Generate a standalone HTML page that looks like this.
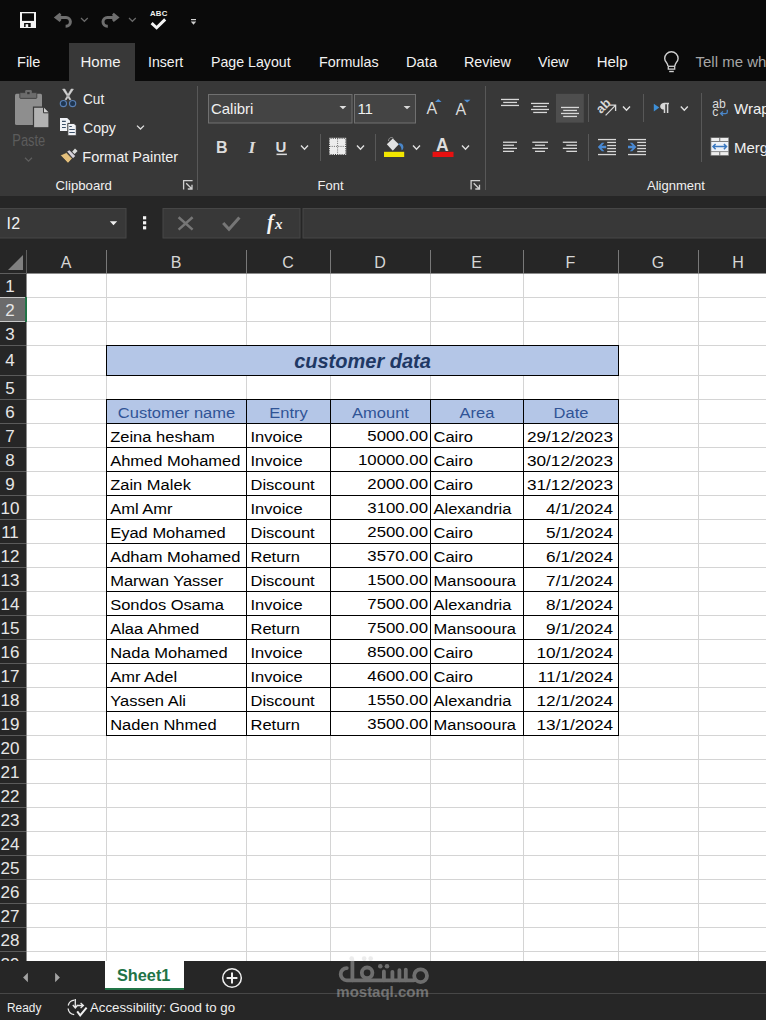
<!DOCTYPE html>
<html><head><meta charset="utf-8"><style>
*{margin:0;padding:0;box-sizing:border-box}
html,body{width:766px;height:1020px;overflow:hidden;background:#222;font-family:"Liberation Sans",sans-serif}
.a{position:absolute}
.t{position:absolute;white-space:nowrap;line-height:1;transform-origin:0 0}
</style></head><body>
<div class="a" style="left:0px;top:0px;width:766px;height:81px;background:#0a0a0a;"></div>
<div class="a" style="left:69px;top:43px;width:66px;height:38px;background:#383838;"></div>
<div class="a" style="left:0px;top:81px;width:766px;height:115px;background:#383838;"></div>
<div class="a" style="left:0px;top:196px;width:766px;height:54px;background:#262626;"></div>
<div class="a" style="left:27px;top:274px;width:739px;height:687px;background:#fff;"></div>
<div class="a" style="left:0px;top:250px;width:766px;height:23px;background:#262626;"></div>
<div class="a" style="left:0px;top:250px;width:26px;height:711px;background:#262626;"></div>
<div class="a" style="left:0px;top:273px;width:27px;height:1px;background:#5e5e5e;"></div>
<div class="a" style="left:27px;top:273px;width:739px;height:1px;background:#8c8c8c;"></div>
<div class="a" style="left:26px;top:250px;width:1px;height:24px;background:#5e5e5e;"></div>
<div class="a" style="left:26px;top:274px;width:1px;height:687px;background:#8a8a8a;"></div>
<div class="a" style="left:106px;top:250px;width:1px;height:23px;background:#787878;"></div>
<div class="a" style="left:246px;top:250px;width:1px;height:23px;background:#787878;"></div>
<div class="a" style="left:330px;top:250px;width:1px;height:23px;background:#787878;"></div>
<div class="a" style="left:430px;top:250px;width:1px;height:23px;background:#787878;"></div>
<div class="a" style="left:523px;top:250px;width:1px;height:23px;background:#787878;"></div>
<div class="a" style="left:618px;top:250px;width:1px;height:23px;background:#787878;"></div>
<div class="a" style="left:698px;top:250px;width:1px;height:23px;background:#787878;"></div>
<div class="t" style="left:26px;width:80px;top:255px;font-size:16px;color:#d6d6d6;text-align:center">A</div>
<div class="t" style="left:106px;width:140px;top:255px;font-size:16px;color:#d6d6d6;text-align:center">B</div>
<div class="t" style="left:246px;width:84px;top:255px;font-size:16px;color:#d6d6d6;text-align:center">C</div>
<div class="t" style="left:330px;width:100px;top:255px;font-size:16px;color:#d6d6d6;text-align:center">D</div>
<div class="t" style="left:430px;width:93px;top:255px;font-size:16px;color:#d6d6d6;text-align:center">E</div>
<div class="t" style="left:523px;width:95px;top:255px;font-size:16px;color:#d6d6d6;text-align:center">F</div>
<div class="t" style="left:618px;width:80px;top:255px;font-size:16px;color:#d6d6d6;text-align:center">G</div>
<div class="t" style="left:698px;width:80px;top:255px;font-size:16px;color:#d6d6d6;text-align:center">H</div>
<div class="a" style="left:106px;top:274px;width:1px;height:687px;background:#d4d4d4;"></div>
<div class="a" style="left:246px;top:274px;width:1px;height:687px;background:#d4d4d4;"></div>
<div class="a" style="left:330px;top:274px;width:1px;height:687px;background:#d4d4d4;"></div>
<div class="a" style="left:430px;top:274px;width:1px;height:687px;background:#d4d4d4;"></div>
<div class="a" style="left:523px;top:274px;width:1px;height:687px;background:#d4d4d4;"></div>
<div class="a" style="left:618px;top:274px;width:1px;height:687px;background:#d4d4d4;"></div>
<div class="a" style="left:698px;top:274px;width:1px;height:687px;background:#d4d4d4;"></div>
<div class="a" style="left:27px;top:297px;width:739px;height:1px;background:#d4d4d4;"></div>
<div class="a" style="left:0px;top:297px;width:26px;height:1px;background:#5a5a5a;"></div>
<div class="a" style="left:27px;top:321px;width:739px;height:1px;background:#d4d4d4;"></div>
<div class="a" style="left:0px;top:321px;width:26px;height:1px;background:#5a5a5a;"></div>
<div class="a" style="left:27px;top:345px;width:739px;height:1px;background:#d4d4d4;"></div>
<div class="a" style="left:0px;top:345px;width:26px;height:1px;background:#5a5a5a;"></div>
<div class="a" style="left:27px;top:375px;width:739px;height:1px;background:#d4d4d4;"></div>
<div class="a" style="left:0px;top:375px;width:26px;height:1px;background:#5a5a5a;"></div>
<div class="a" style="left:27px;top:399px;width:739px;height:1px;background:#d4d4d4;"></div>
<div class="a" style="left:0px;top:399px;width:26px;height:1px;background:#5a5a5a;"></div>
<div class="a" style="left:27px;top:423px;width:739px;height:1px;background:#d4d4d4;"></div>
<div class="a" style="left:0px;top:423px;width:26px;height:1px;background:#5a5a5a;"></div>
<div class="a" style="left:27px;top:447px;width:739px;height:1px;background:#d4d4d4;"></div>
<div class="a" style="left:0px;top:447px;width:26px;height:1px;background:#5a5a5a;"></div>
<div class="a" style="left:27px;top:471px;width:739px;height:1px;background:#d4d4d4;"></div>
<div class="a" style="left:0px;top:471px;width:26px;height:1px;background:#5a5a5a;"></div>
<div class="a" style="left:27px;top:495px;width:739px;height:1px;background:#d4d4d4;"></div>
<div class="a" style="left:0px;top:495px;width:26px;height:1px;background:#5a5a5a;"></div>
<div class="a" style="left:27px;top:519px;width:739px;height:1px;background:#d4d4d4;"></div>
<div class="a" style="left:0px;top:519px;width:26px;height:1px;background:#5a5a5a;"></div>
<div class="a" style="left:27px;top:543px;width:739px;height:1px;background:#d4d4d4;"></div>
<div class="a" style="left:0px;top:543px;width:26px;height:1px;background:#5a5a5a;"></div>
<div class="a" style="left:27px;top:567px;width:739px;height:1px;background:#d4d4d4;"></div>
<div class="a" style="left:0px;top:567px;width:26px;height:1px;background:#5a5a5a;"></div>
<div class="a" style="left:27px;top:591px;width:739px;height:1px;background:#d4d4d4;"></div>
<div class="a" style="left:0px;top:591px;width:26px;height:1px;background:#5a5a5a;"></div>
<div class="a" style="left:27px;top:615px;width:739px;height:1px;background:#d4d4d4;"></div>
<div class="a" style="left:0px;top:615px;width:26px;height:1px;background:#5a5a5a;"></div>
<div class="a" style="left:27px;top:639px;width:739px;height:1px;background:#d4d4d4;"></div>
<div class="a" style="left:0px;top:639px;width:26px;height:1px;background:#5a5a5a;"></div>
<div class="a" style="left:27px;top:663px;width:739px;height:1px;background:#d4d4d4;"></div>
<div class="a" style="left:0px;top:663px;width:26px;height:1px;background:#5a5a5a;"></div>
<div class="a" style="left:27px;top:687px;width:739px;height:1px;background:#d4d4d4;"></div>
<div class="a" style="left:0px;top:687px;width:26px;height:1px;background:#5a5a5a;"></div>
<div class="a" style="left:27px;top:711px;width:739px;height:1px;background:#d4d4d4;"></div>
<div class="a" style="left:0px;top:711px;width:26px;height:1px;background:#5a5a5a;"></div>
<div class="a" style="left:27px;top:735px;width:739px;height:1px;background:#d4d4d4;"></div>
<div class="a" style="left:0px;top:735px;width:26px;height:1px;background:#5a5a5a;"></div>
<div class="a" style="left:27px;top:759px;width:739px;height:1px;background:#d4d4d4;"></div>
<div class="a" style="left:0px;top:759px;width:26px;height:1px;background:#5a5a5a;"></div>
<div class="a" style="left:27px;top:783px;width:739px;height:1px;background:#d4d4d4;"></div>
<div class="a" style="left:0px;top:783px;width:26px;height:1px;background:#5a5a5a;"></div>
<div class="a" style="left:27px;top:807px;width:739px;height:1px;background:#d4d4d4;"></div>
<div class="a" style="left:0px;top:807px;width:26px;height:1px;background:#5a5a5a;"></div>
<div class="a" style="left:27px;top:831px;width:739px;height:1px;background:#d4d4d4;"></div>
<div class="a" style="left:0px;top:831px;width:26px;height:1px;background:#5a5a5a;"></div>
<div class="a" style="left:27px;top:855px;width:739px;height:1px;background:#d4d4d4;"></div>
<div class="a" style="left:0px;top:855px;width:26px;height:1px;background:#5a5a5a;"></div>
<div class="a" style="left:27px;top:879px;width:739px;height:1px;background:#d4d4d4;"></div>
<div class="a" style="left:0px;top:879px;width:26px;height:1px;background:#5a5a5a;"></div>
<div class="a" style="left:27px;top:903px;width:739px;height:1px;background:#d4d4d4;"></div>
<div class="a" style="left:0px;top:903px;width:26px;height:1px;background:#5a5a5a;"></div>
<div class="a" style="left:27px;top:927px;width:739px;height:1px;background:#d4d4d4;"></div>
<div class="a" style="left:0px;top:927px;width:26px;height:1px;background:#5a5a5a;"></div>
<div class="a" style="left:27px;top:951px;width:739px;height:1px;background:#d4d4d4;"></div>
<div class="a" style="left:0px;top:951px;width:26px;height:1px;background:#5a5a5a;"></div>
<div class="a" style="left:0px;top:298px;width:26px;height:23px;background:#6b6b6b;"></div>
<div class="a" style="left:0px;top:297px;width:26px;height:1px;background:#c8c8c8;"></div>
<div class="a" style="left:0px;top:321px;width:26px;height:1px;background:#c8c8c8;"></div>
<div class="a" style="left:25px;top:297px;width:2px;height:25px;background:#217346;"></div>
<div class="t" style="left:0;width:20px;text-align:center;top:278px;font-size:17px;color:#e6e6e6">1</div>
<div class="t" style="left:0;width:20px;text-align:center;top:302px;font-size:17px;color:#e6e6e6">2</div>
<div class="t" style="left:0;width:20px;text-align:center;top:326px;font-size:17px;color:#e6e6e6">3</div>
<div class="t" style="left:0;width:20px;text-align:center;top:352px;font-size:17px;color:#e6e6e6">4</div>
<div class="t" style="left:0;width:20px;text-align:center;top:380px;font-size:17px;color:#e6e6e6">5</div>
<div class="t" style="left:0;width:20px;text-align:center;top:404px;font-size:17px;color:#e6e6e6">6</div>
<div class="t" style="left:0;width:20px;text-align:center;top:428px;font-size:17px;color:#e6e6e6">7</div>
<div class="t" style="left:0;width:20px;text-align:center;top:452px;font-size:17px;color:#e6e6e6">8</div>
<div class="t" style="left:0;width:20px;text-align:center;top:476px;font-size:17px;color:#e6e6e6">9</div>
<div class="t" style="left:0;width:20px;text-align:center;top:500px;font-size:17px;color:#e6e6e6">10</div>
<div class="t" style="left:0;width:20px;text-align:center;top:524px;font-size:17px;color:#e6e6e6">11</div>
<div class="t" style="left:0;width:20px;text-align:center;top:548px;font-size:17px;color:#e6e6e6">12</div>
<div class="t" style="left:0;width:20px;text-align:center;top:572px;font-size:17px;color:#e6e6e6">13</div>
<div class="t" style="left:0;width:20px;text-align:center;top:596px;font-size:17px;color:#e6e6e6">14</div>
<div class="t" style="left:0;width:20px;text-align:center;top:620px;font-size:17px;color:#e6e6e6">15</div>
<div class="t" style="left:0;width:20px;text-align:center;top:644px;font-size:17px;color:#e6e6e6">16</div>
<div class="t" style="left:0;width:20px;text-align:center;top:668px;font-size:17px;color:#e6e6e6">17</div>
<div class="t" style="left:0;width:20px;text-align:center;top:692px;font-size:17px;color:#e6e6e6">18</div>
<div class="t" style="left:0;width:20px;text-align:center;top:716px;font-size:17px;color:#e6e6e6">19</div>
<div class="t" style="left:0;width:20px;text-align:center;top:740px;font-size:17px;color:#e6e6e6">20</div>
<div class="t" style="left:0;width:20px;text-align:center;top:764px;font-size:17px;color:#e6e6e6">21</div>
<div class="t" style="left:0;width:20px;text-align:center;top:788px;font-size:17px;color:#e6e6e6">22</div>
<div class="t" style="left:0;width:20px;text-align:center;top:812px;font-size:17px;color:#e6e6e6">23</div>
<div class="t" style="left:0;width:20px;text-align:center;top:836px;font-size:17px;color:#e6e6e6">24</div>
<div class="t" style="left:0;width:20px;text-align:center;top:860px;font-size:17px;color:#e6e6e6">25</div>
<div class="t" style="left:0;width:20px;text-align:center;top:884px;font-size:17px;color:#e6e6e6">26</div>
<div class="t" style="left:0;width:20px;text-align:center;top:908px;font-size:17px;color:#e6e6e6">27</div>
<div class="t" style="left:0;width:20px;text-align:center;top:932px;font-size:17px;color:#e6e6e6">28</div>
<div class="t" style="left:0;width:20px;text-align:center;top:956px;font-size:17px;color:#e6e6e6">29</div>
<div class="a" style="left:0px;top:961px;width:766px;height:32px;background:#262626;"></div>
<div class="a" style="left:0px;top:993px;width:766px;height:1px;background:#474747;"></div>
<div class="a" style="left:0px;top:994px;width:766px;height:26px;background:#262626;"></div>
<div class="a" style="left:105px;top:961px;width:79px;height:27px;background:#fff;"></div>
<div class="a" style="left:105px;top:988px;width:79px;height:2px;background:#217346;"></div>
<svg class="a" style="left:0;top:0" width="766" height="1020" viewBox="0 0 766 1020">
<rect x="20" y="12" width="16" height="16" fill="#f4f4f4"/>
<rect x="22" y="13.3" width="12" height="7.6" fill="#0a0a0a"/>
<rect x="24.1" y="23" width="6.6" height="4" fill="#0a0a0a"/>
<rect x="25.6" y="24.2" width="2.6" height="2.8" fill="#f4f4f4"/>
<g><path d="M56.5 17.4 H66 A4.4 4.4 0 0 1 66 26.2 H65.6" fill="none" stroke="#6e6e6e" stroke-width="3"/>
<path d="M60.6 13.9 L56.2 17.4 L60.6 20.9" fill="none" stroke="#6e6e6e" stroke-width="3" stroke-linejoin="miter"/></g>
<g transform="translate(173.4 0) scale(-1 1)"><path d="M56.5 17.4 H66 A4.4 4.4 0 0 1 66 26.2 H65.6" fill="none" stroke="#6e6e6e" stroke-width="3"/>
<path d="M60.6 13.9 L56.2 17.4 L60.6 20.9" fill="none" stroke="#6e6e6e" stroke-width="3" stroke-linejoin="miter"/></g>
<path d="M81 18 L84.4 21.3 L87.8 18" fill="none" stroke="#6a6a6a" stroke-width="1.2"/>
<path d="M129 18 L132.4 21.3 L135.8 18" fill="none" stroke="#6a6a6a" stroke-width="1.2"/>
<text x="150" y="15.8" font-family="Liberation Sans" font-weight="bold" font-size="7.8" fill="#f0f0f0" letter-spacing="0.2">ABC</text>
<path d="M151.6 23.2 L156.6 27.8 L165.2 19.4" fill="none" stroke="#f4f4f4" stroke-width="3"/>
<rect x="191" y="19" width="5" height="1.2" fill="#d0d0d0"/>
<path d="M190.8 21.4 H196.2 L193.5 24.8 Z" fill="#d0d0d0"/>
<path d="M667.9 66 C667.9 63.2 664.7 61.6 664.7 58.4 A6.7 6.7 0 0 1 678.1 58.4 C678.1 61.6 674.9 63.2 674.9 66" fill="none" stroke="#d0d0d0" stroke-width="1.4"/>
<rect x="668.3" y="66.3" width="6.4" height="2.8" fill="none" stroke="#d0d0d0" stroke-width="1.3"/>
<rect x="669.2" y="70.8" width="4.6" height="1.4" fill="#d0d0d0"/>
<rect x="15" y="93.7" width="27" height="31.3" rx="1.5" fill="#8e8e8e"/>
<rect x="19.8" y="92.6" width="17" height="5.8" rx="0.8" fill="#6c6c6c" stroke="#383838" stroke-width="0.8"/>
<rect x="25.2" y="90" width="6.6" height="4" rx="1.2" fill="#6c6c6c"/>
<rect x="27.2" y="92" width="2.4" height="2.2" fill="#383838"/>
<path d="M33.5 107.2 H43.5 L49 112.8 V127.8 H33.5 Z" fill="#b2b2b2" stroke="#383838" stroke-width="1.2"/>
<path d="M43.5 107.2 V112.8 H49" fill="#d0d0d0" stroke="#383838" stroke-width="1"/>
<text x="12.3" y="146.2" font-family="Liberation Sans" font-size="16.3" fill="#5c5c5c" textLength="33" lengthAdjust="spacingAndGlyphs">Paste</text>
<path d="M25 157.8 L28.5 161.2 L32 157.8" fill="none" stroke="#5e5e5e" stroke-width="1.2"/>
<path d="M62.6 89.2 L64.8 89 L70.9 99.6 L69.8 100 Z M73.4 89.2 L71.2 89 L65.1 99.6 L66.2 100 Z" fill="#d2d2d2" stroke="#d2d2d2" stroke-width="0.6" stroke-linejoin="round"/>
<circle cx="63.4" cy="103.6" r="3.1" fill="#1e3550" stroke="#5a80b4" stroke-width="1.2"/>
<circle cx="72.6" cy="103.6" r="3.1" fill="#1e3550" stroke="#5a80b4" stroke-width="1.2"/>
<path d="M60 118 H67.2 L70 120.8 V131 H60 Z" fill="#f0f2f6"/>
<path d="M62 121.4 H65.8 M62 124.5 H65.8 M62 127.5 H65.8" stroke="#3b5068" stroke-width="1.2"/>
<path d="M67.8 123.4 H74 L76.3 125.7 V135.8 H67.8 Z" fill="#f0f2f6" stroke="#383838" stroke-width="1"/>
<path d="M69.3 126.5 H71.8 M69.3 129.5 H74.8 M69.3 132.5 H74.8" stroke="#3b5068" stroke-width="1.2"/>
<path d="M137 125.6 L140.5 129 L144 125.6" fill="none" stroke="#e0e0e0" stroke-width="1.3"/>
<path d="M60.4 155.2 L66.4 152.6 L72.2 158.6 L68 163.2 Z" fill="#e4c07c" stroke="#2a2a2a" stroke-width="0.6"/>
<path d="M67.2 151.6 L69.4 150.2 L75.2 156 L73 158.2 Z" fill="#d6d2da"/>
<path d="M72.2 151.8 L75 148.6 L77.6 151 L74.6 154 Z" fill="#dcdedc"/>
<path d="M183.6 189.6 V180.6 H192.6" fill="none" stroke="#d0d0d0" stroke-width="1.3"/>
<path d="M186.2 183.2 L192 189 M192 184.8 V189 H187.8" fill="none" stroke="#d0d0d0" stroke-width="1.3"/>
<path d="M471.1 189.6 V180.6 H480.1" fill="none" stroke="#d0d0d0" stroke-width="1.3"/>
<path d="M473.7 183.2 L479.5 189 M479.5 184.8 V189 H475.3" fill="none" stroke="#d0d0d0" stroke-width="1.3"/>
<path d="M197.5 86 V190" stroke="#585858" stroke-width="1"/>
<path d="M485.5 86 V190" stroke="#585858" stroke-width="1"/>
<path d="M320.5 134 V161" stroke="#585858" stroke-width="1"/>
<path d="M375.5 134 V161" stroke="#585858" stroke-width="1"/>
<path d="M588.5 94 V122" stroke="#585858" stroke-width="1"/>
<path d="M643.5 94 V122" stroke="#585858" stroke-width="1"/>
<path d="M588.5 134 V161" stroke="#585858" stroke-width="1"/>
<path d="M701.5 93 V162" stroke="#585858" stroke-width="1"/>
<rect x="208.5" y="94.5" width="143.5" height="28.5" fill="#444444" stroke="#707070" stroke-width="1"/>
<rect x="354.5" y="94.5" width="61" height="28.5" fill="#444444" stroke="#707070" stroke-width="1"/>
<path d="M339.5 106 H346.4 L342.95 109.3 Z" fill="#e0e0e0"/>
<path d="M403.6 106 H410.5 L407.05 109.3 Z" fill="#d8d8d8"/>
<text x="426.6" y="113.9" font-family="Liberation Sans" font-size="16" fill="#dadada">A</text>
<path d="M435 101.9 L438.3 98.9 L441.6 101.9 Z" fill="#4f8fd6"/>
<text x="455.5" y="115" font-family="Liberation Sans" font-size="16" fill="#dadada">A</text>
<path d="M463.9 99.7 L470.4 99.7 L467.15 102.4 Z" fill="#4f8fd6"/>
<text x="216" y="153" font-family="Liberation Sans" font-weight="bold" font-size="16" fill="#dcdcdc">B</text>
<text x="248.6" y="153" font-family="Liberation Serif" font-weight="bold" font-style="italic" font-size="17.5" fill="#dcdcdc">I</text>
<text x="275.5" y="151.6" font-family="Liberation Sans" font-weight="bold" font-size="15" fill="#dcdcdc">U</text>
<rect x="276.5" y="153.6" width="10.4" height="1.5" fill="#dcdcdc"/>
<path d="M301 145.6 L304.5 149.2 L308 145.6" fill="none" stroke="#e0e0e0" stroke-width="1.4"/>
<path d="M357 145.6 L360.5 149.2 L364 145.6" fill="none" stroke="#e0e0e0" stroke-width="1.4"/>
<path d="M413 145.6 L416.5 149.2 L420 145.6" fill="none" stroke="#e0e0e0" stroke-width="1.4"/>
<path d="M462 145.6 L465.5 149.2 L469 145.6" fill="none" stroke="#e0e0e0" stroke-width="1.4"/>
<rect x="329" y="137.8" width="17.2" height="17.2" fill="#ececec"/>
<path d="M337.6 138.5 V154.5 M329.5 146.4 H345.7" stroke="#6a6a6a" stroke-width="1" stroke-dasharray="1 1.2"/>
<path d="M329 138.3 H346.2 M329 154.5 H346.2 M329.5 137.8 V155 M345.7 137.8 V155" stroke="#363636" stroke-width="1" stroke-dasharray="1 1.2" stroke-dashoffset="0.6"/>
<path d="M386.8 144.2 L392.8 138.6 L398.8 144.2 L392.8 150.8 Z" fill="#e2e2e2"/>
<path d="M388.5 141 C388.5 137.5 392 136.5 393.5 138.6" fill="none" stroke="#9a9a9a" stroke-width="0.9"/>
<path d="M398.6 143.4 C401 142.6 403.4 144 403.4 147 C403.4 149 402.6 150 401.6 150.3 C401.3 147.5 400.6 145.6 398.6 144.6 Z" fill="#4a86c8"/>
<rect x="384" y="151.8" width="20.2" height="5.2" fill="#f2e600"/>
<text x="436" y="151.3" font-family="Liberation Sans" font-weight="bold" font-size="17.5" fill="#dedede">A</text>
<rect x="432.6" y="151.8" width="20.9" height="5.2" fill="#e81010"/>
<rect x="556" y="93.8" width="27.8" height="28.8" fill="#4e4e4e"/>
<rect x="501" y="98.8" width="18.0" height="1.3" fill="#d8d8d8"/>
<rect x="503.2" y="101.8" width="13.8" height="1.3" fill="#d8d8d8"/>
<rect x="501" y="104.8" width="18.0" height="1.3" fill="#d8d8d8"/>
<rect x="531" y="102.8" width="18.0" height="1.3" fill="#d8d8d8"/>
<rect x="533.2" y="105.8" width="13.8" height="1.3" fill="#d8d8d8"/>
<rect x="531" y="108.8" width="18.0" height="1.3" fill="#d8d8d8"/>
<rect x="533.2" y="111.8" width="13.8" height="1.3" fill="#d8d8d8"/>
<rect x="561" y="106.8" width="18.0" height="1.3" fill="#d8d8d8"/>
<rect x="563.2" y="109.8" width="13.8" height="1.3" fill="#d8d8d8"/>
<rect x="561" y="112.8" width="18.0" height="1.3" fill="#d8d8d8"/>
<rect x="563.2" y="115.8" width="13.8" height="1.3" fill="#d8d8d8"/>
<rect x="503" y="141.6" width="14.0" height="1.3" fill="#d8d8d8"/>
<rect x="503" y="144.6" width="11.0" height="1.3" fill="#d8d8d8"/>
<rect x="503" y="147.7" width="14.0" height="1.3" fill="#d8d8d8"/>
<rect x="503" y="150.7" width="11.0" height="1.3" fill="#d8d8d8"/>
<rect x="532.3" y="141.6" width="15.7" height="1.3" fill="#d8d8d8"/>
<rect x="535" y="144.6" width="10.0" height="1.3" fill="#d8d8d8"/>
<rect x="532.3" y="147.7" width="15.7" height="1.3" fill="#d8d8d8"/>
<rect x="535" y="150.7" width="10.0" height="1.3" fill="#d8d8d8"/>
<rect x="562.8" y="141.6" width="14.2" height="1.3" fill="#d8d8d8"/>
<rect x="566.3" y="144.6" width="10.7" height="1.3" fill="#d8d8d8"/>
<rect x="562.8" y="147.7" width="14.2" height="1.3" fill="#d8d8d8"/>
<rect x="566.3" y="150.7" width="10.7" height="1.3" fill="#d8d8d8"/>
<g transform="translate(603.6 105.2) rotate(-45)"><text x="-8.2" y="4.6" font-family="Liberation Sans" font-weight="bold" font-size="12.8" fill="#d8d8d8">ab</text></g>
<path d="M605.6 115.4 L615.2 105.6 M609.8 105.2 H615.6 V111" fill="none" stroke="#d8d8d8" stroke-width="1.3"/>
<path d="M623 106.5 L626.5 110.2 L630 106.5" fill="none" stroke="#e0e0e0" stroke-width="1.4"/>
<rect x="598" y="138.9" width="18" height="1.3" fill="#d8d8d8"/>
<rect x="598" y="153.9" width="18" height="1.3" fill="#d8d8d8"/>
<rect x="607.2" y="141.8" width="8.8" height="1.3" fill="#d8d8d8"/>
<rect x="607.2" y="144.9" width="8.8" height="1.3" fill="#d8d8d8"/>
<rect x="607.2" y="147.9" width="8.8" height="1.3" fill="#d8d8d8"/>
<rect x="607.2" y="150.9" width="8.8" height="1.3" fill="#d8d8d8"/>
<path d="M597.8 147 L601.9 142.8 H604.4 L601.6 145.7 H606.2 V148.3 H601.6 L604.4 151.2 H601.9 Z" fill="#4a8ad4"/>
<rect x="628" y="138.9" width="18" height="1.3" fill="#d8d8d8"/>
<rect x="628" y="153.9" width="18" height="1.3" fill="#d8d8d8"/>
<rect x="637.2" y="141.8" width="8.8" height="1.3" fill="#d8d8d8"/>
<rect x="637.2" y="144.9" width="8.8" height="1.3" fill="#d8d8d8"/>
<rect x="637.2" y="147.9" width="8.8" height="1.3" fill="#d8d8d8"/>
<rect x="637.2" y="150.9" width="8.8" height="1.3" fill="#d8d8d8"/>
<path d="M636.4 147 L632.3 142.8 H629.8 L632.6 145.7 H628 V148.3 H632.6 L629.8 151.2 H632.3 Z" fill="#4a8ad4"/>
<path d="M653.8 103.8 L659.3 107.6 L653.8 111.5 Z" fill="#3d8fd8"/>
<path d="M663.6 103.5 H669 M664.5 103.5 V113 M667.6 103.5 V113" stroke="#d8d8d8" stroke-width="1.5" fill="none"/>
<path d="M664.5 103 C661 103 660.2 105 660.2 106.4 C660.2 108 661.5 109.6 664.5 109.6 Z" fill="#d8d8d8"/>
<path d="M680.8 106.5 L684.3 110.2 L687.8 106.5" fill="none" stroke="#e0e0e0" stroke-width="1.4"/>
<text x="712.2" y="108.2" font-family="Liberation Sans" font-size="12.2" fill="#dcdcdc">ab</text>
<text x="712.2" y="116.3" font-family="Liberation Sans" font-size="12.2" fill="#dcdcdc">c</text>
<path d="M727.3 109.8 V112 Q727.3 113.6 725.6 113.6 H720.8 M723 111.4 L720.6 113.6 L723 115.8" fill="none" stroke="#4a86c8" stroke-width="1.3"/>
<rect x="710.5" y="137.3" width="18.5" height="18.5" fill="#7c7c7c"/>
<rect x="711.3" y="138" width="7.8" height="3" fill="#eeeeee"/><rect x="720.3" y="138" width="7.9" height="3" fill="#eeeeee"/>
<rect x="711.3" y="142" width="16.9" height="9.2" fill="#eef2f8"/>
<rect x="711.3" y="152.1" width="7.8" height="3" fill="#eeeeee"/><rect x="720.3" y="152.1" width="7.9" height="3" fill="#eeeeee"/>
<path d="M713 146.6 H726.5 M715.6 144 L713 146.6 L715.6 149.2 M723.9 144 L726.5 146.6 L723.9 149.2" fill="none" stroke="#3a78c0" stroke-width="1.5"/>
<rect x="-1" y="208.5" width="127" height="29.5" fill="#383838" stroke="#464646" stroke-width="1"/>
<path d="M109.8 221.3 H117.2 L113.5 225.2 Z" fill="#f0f0f0"/>
<rect x="143" y="216.2" width="3.2" height="3.2" fill="#f4f4f4"/>
<rect x="143" y="221.2" width="3.2" height="3.2" fill="#f4f4f4"/>
<rect x="143" y="226.2" width="3.2" height="3.2" fill="#f4f4f4"/>
<rect x="163" y="208.5" width="137" height="29.5" fill="#383838" stroke="#464646" stroke-width="1"/>
<rect x="303" y="208.5" width="470" height="29.5" fill="#383838" stroke="#464646" stroke-width="1"/>
<path d="M178.6 217.2 L192.6 229.6 M192.6 217.2 L178.6 229.6" stroke="#767676" stroke-width="2.5"/>
<path d="M223.2 223 L229 229.2 L239.4 217.6" fill="none" stroke="#767676" stroke-width="3"/>
<text x="267" y="229" font-family="Liberation Serif" font-weight="bold" font-style="italic" font-size="20" fill="#f4f4f4">f</text>
<text x="275" y="229" font-family="Liberation Serif" font-weight="bold" font-style="italic" font-size="15" fill="#f4f4f4">x</text>
<path d="M23 255 V270 H8 Z" fill="#808080"/>
<path d="M27.9 972.7 V982.3 L23.1 977.5 Z" fill="#a4a4a4"/>
<path d="M55.1 972.7 V982.3 L59.9 977.5 Z" fill="#a4a4a4"/>
<circle cx="232" cy="978" r="9.3" fill="none" stroke="#f0f0f0" stroke-width="1.5"/>
<path d="M232 972.6 V983.4 M226.6 978 H237.4" stroke="#f0f0f0" stroke-width="2"/>
<path d="M74.5 1000.2 A7 7 0 0 0 68.2 1005.5" fill="none" stroke="#e8e8e8" stroke-width="1.3"/>
<path d="M68.1 1008.5 A7 7 0 0 0 74.2 1014.6" fill="none" stroke="#e8e8e8" stroke-width="1.3"/>
<path d="M75.3 999 V1007.5 M72.8 1005 L75.3 1008 L77.8 1005 M76.5 1005.5 H83 M80.6 1003 L83.4 1005.5 L80.6 1008" fill="none" stroke="#e8e8e8" stroke-width="1.3"/>
<path d="M77.2 1011.3 L80.2 1015.4 L86.6 1007.6" fill="none" stroke="#f0f0f0" stroke-width="2"/>
</svg>
<div class="t" style="left:17.3px;top:54.24px;font-size:15px;color:#f2f2f2;font-weight:normal;font-style:normal;transform:scale(0.97,1.0);">File</div>
<div class="t" style="left:80.5px;top:54.24px;font-size:15px;color:#f2f2f2;font-weight:normal;font-style:normal;">Home</div>
<div class="t" style="left:148.4px;top:54.24px;font-size:15px;color:#f2f2f2;font-weight:normal;font-style:normal;transform:scale(0.94,1.0);">Insert</div>
<div class="t" style="left:211.1px;top:54.24px;font-size:15px;color:#f2f2f2;font-weight:normal;font-style:normal;transform:scale(0.945,1.0);">Page Layout</div>
<div class="t" style="left:318.5px;top:54.24px;font-size:15px;color:#f2f2f2;font-weight:normal;font-style:normal;transform:scale(0.953,1.0);">Formulas</div>
<div class="t" style="left:405.6px;top:54.24px;font-size:15px;color:#f2f2f2;font-weight:normal;font-style:normal;transform:scale(0.98,1.0);">Data</div>
<div class="t" style="left:464.3px;top:54.24px;font-size:15px;color:#f2f2f2;font-weight:normal;font-style:normal;transform:scale(0.953,1.0);">Review</div>
<div class="t" style="left:537.8px;top:54.24px;font-size:15px;color:#f2f2f2;font-weight:normal;font-style:normal;transform:scale(0.95,1.0);">View</div>
<div class="t" style="left:596.7px;top:54.24px;font-size:15px;color:#f2f2f2;font-weight:normal;font-style:normal;">Help</div>
<div class="t" style="left:695.5px;top:54.24px;font-size:15px;color:#a6a6a6;font-weight:normal;font-style:normal;">Tell me what you want to do</div>
<div class="t" style="left:83.3px;top:91.34px;font-size:15px;color:#f0f0f0;font-weight:normal;font-style:normal;transform:scale(0.91,1.0);">Cut</div>
<div class="t" style="left:83.3px;top:120.34px;font-size:15px;color:#f0f0f0;font-weight:normal;font-style:normal;transform:scale(0.94,1.0);">Copy</div>
<div class="t" style="left:82.3px;top:149.71px;font-size:14.5px;color:#f0f0f0;font-weight:normal;font-style:normal;">Format Painter</div>
<div class="t" style="left:55.5px;top:179.28px;font-size:13.2px;color:#f0f0f0;font-weight:normal;font-style:normal;">Clipboard</div>
<div class="t" style="left:317.5px;top:179.30px;font-size:13px;color:#f0f0f0;font-weight:normal;font-style:normal;">Font</div>
<div class="t" style="left:647.0px;top:179.30px;font-size:13px;color:#f0f0f0;font-weight:normal;font-style:normal;">Alignment</div>
<div class="t" style="left:210.9px;top:100.84px;font-size:15px;color:#f0f0f0;font-weight:normal;font-style:normal;">Calibri</div>
<div class="t" style="left:357.4px;top:100.84px;font-size:15px;color:#f0f0f0;font-weight:normal;font-style:normal;">11</div>
<div class="t" style="left:734.0px;top:100.94px;font-size:15px;color:#f0f0f0;font-weight:normal;font-style:normal;">Wrap Text</div>
<div class="t" style="left:734.0px;top:139.84px;font-size:15px;color:#f0f0f0;font-weight:normal;font-style:normal;">Merge &amp; Center</div>
<div class="t" style="left:6.6px;top:215.61px;font-size:16px;color:#f0f0f0;font-weight:normal;font-style:normal;letter-spacing:0.3px;">I2</div>
<div class="t" style="left:7.3px;top:1001.67px;font-size:12.5px;color:#f0f0f0;font-weight:normal;font-style:normal;transform:scale(0.95,1.0);">Ready</div>
<div class="t" style="left:89.8px;top:1001.67px;font-size:12.5px;color:#f0f0f0;font-weight:normal;font-style:normal;transform:scale(1.06,1.0);">Accessibility: Good to go</div>
<div class="t" style="left:117.0px;top:967.07px;font-size:16.3px;color:#217346;font-weight:bold;font-style:normal;">Sheet1</div>
<div class="a" style="left:106px;top:345px;width:513px;height:31px;background:#b4c6e7;border:1px solid #000"></div>
<div class="t" style="left:107px;width:511px;text-align:center;top:350.5px;font-size:20px;font-weight:bold;font-style:italic;color:#203864">customer data</div>
<div class="a" style="left:106px;top:399px;width:513px;height:25px;background:#b4c6e7;"></div>
<div class="a" style="left:106px;top:399px;width:513px;height:1px;background:#000;"></div>
<div class="a" style="left:106px;top:423px;width:513px;height:1px;background:#000;"></div>
<div class="a" style="left:106px;top:447px;width:513px;height:1px;background:#000;"></div>
<div class="a" style="left:106px;top:471px;width:513px;height:1px;background:#000;"></div>
<div class="a" style="left:106px;top:495px;width:513px;height:1px;background:#000;"></div>
<div class="a" style="left:106px;top:519px;width:513px;height:1px;background:#000;"></div>
<div class="a" style="left:106px;top:543px;width:513px;height:1px;background:#000;"></div>
<div class="a" style="left:106px;top:567px;width:513px;height:1px;background:#000;"></div>
<div class="a" style="left:106px;top:591px;width:513px;height:1px;background:#000;"></div>
<div class="a" style="left:106px;top:615px;width:513px;height:1px;background:#000;"></div>
<div class="a" style="left:106px;top:639px;width:513px;height:1px;background:#000;"></div>
<div class="a" style="left:106px;top:663px;width:513px;height:1px;background:#000;"></div>
<div class="a" style="left:106px;top:687px;width:513px;height:1px;background:#000;"></div>
<div class="a" style="left:106px;top:711px;width:513px;height:1px;background:#000;"></div>
<div class="a" style="left:106px;top:735px;width:513px;height:1px;background:#000;"></div>
<div class="a" style="left:106px;top:399px;width:1px;height:337px;background:#000;"></div>
<div class="a" style="left:246px;top:399px;width:1px;height:337px;background:#000;"></div>
<div class="a" style="left:330px;top:399px;width:1px;height:337px;background:#000;"></div>
<div class="a" style="left:430px;top:399px;width:1px;height:337px;background:#000;"></div>
<div class="a" style="left:523px;top:399px;width:1px;height:337px;background:#000;"></div>
<div class="a" style="left:618px;top:399px;width:1px;height:337px;background:#000;"></div>
<div class="t" style="left:107.0px;top:405.36px;font-size:16.5px;color:#305496;font-weight:normal;font-style:normal;transform:scale(1.0,0.9);width:139px;text-align:center;">Customer name</div>
<div class="t" style="left:247.0px;top:405.36px;font-size:16.5px;color:#305496;font-weight:normal;font-style:normal;transform:scale(1.0,0.9);width:83px;text-align:center;">Entry</div>
<div class="t" style="left:331.0px;top:405.36px;font-size:16.5px;color:#305496;font-weight:normal;font-style:normal;transform:scale(1.0,0.9);width:99px;text-align:center;">Amount</div>
<div class="t" style="left:431.0px;top:405.36px;font-size:16.5px;color:#305496;font-weight:normal;font-style:normal;transform:scale(1.0,0.9);width:92px;text-align:center;">Area</div>
<div class="t" style="left:524.0px;top:405.36px;font-size:16.5px;color:#305496;font-weight:normal;font-style:normal;transform:scale(1.0,0.9);width:94px;text-align:center;">Date</div>
<div class="t" style="left:110.2px;top:429.06px;font-size:16.5px;color:#000;font-weight:normal;font-style:normal;transform:scale(1.0,0.9);">Zeina hesham</div>
<div class="t" style="left:250.5px;top:429.06px;font-size:16.5px;color:#000;font-weight:normal;font-style:normal;transform:scale(1.0,0.9);">Invoice</div>
<div class="t" style="left:331.0px;top:429.03px;font-size:16.8px;color:#000;font-weight:normal;font-style:normal;transform:scale(1.0,0.9);width:97px;text-align:right;">5000.00</div>
<div class="t" style="left:433.5px;top:429.06px;font-size:16.5px;color:#000;font-weight:normal;font-style:normal;transform:scale(1.0,0.9);">Cairo</div>
<div class="t" style="left:524.0px;top:428.98px;font-size:17.2px;color:#000;font-weight:normal;font-style:normal;transform:scale(1.0,0.9);width:89px;text-align:right;">29/12/2023</div>
<div class="t" style="left:110.2px;top:453.06px;font-size:16.5px;color:#000;font-weight:normal;font-style:normal;transform:scale(1.0,0.9);">Ahmed Mohamed</div>
<div class="t" style="left:250.5px;top:453.06px;font-size:16.5px;color:#000;font-weight:normal;font-style:normal;transform:scale(1.0,0.9);">Invoice</div>
<div class="t" style="left:331.0px;top:453.03px;font-size:16.8px;color:#000;font-weight:normal;font-style:normal;transform:scale(1.0,0.9);width:97px;text-align:right;">10000.00</div>
<div class="t" style="left:433.5px;top:453.06px;font-size:16.5px;color:#000;font-weight:normal;font-style:normal;transform:scale(1.0,0.9);">Cairo</div>
<div class="t" style="left:524.0px;top:452.98px;font-size:17.2px;color:#000;font-weight:normal;font-style:normal;transform:scale(1.0,0.9);width:89px;text-align:right;">30/12/2023</div>
<div class="t" style="left:110.2px;top:477.06px;font-size:16.5px;color:#000;font-weight:normal;font-style:normal;transform:scale(1.0,0.9);">Zain Malek</div>
<div class="t" style="left:250.5px;top:477.06px;font-size:16.5px;color:#000;font-weight:normal;font-style:normal;transform:scale(1.0,0.9);">Discount</div>
<div class="t" style="left:331.0px;top:477.03px;font-size:16.8px;color:#000;font-weight:normal;font-style:normal;transform:scale(1.0,0.9);width:97px;text-align:right;">2000.00</div>
<div class="t" style="left:433.5px;top:477.06px;font-size:16.5px;color:#000;font-weight:normal;font-style:normal;transform:scale(1.0,0.9);">Cairo</div>
<div class="t" style="left:524.0px;top:476.98px;font-size:17.2px;color:#000;font-weight:normal;font-style:normal;transform:scale(1.0,0.9);width:89px;text-align:right;">31/12/2023</div>
<div class="t" style="left:110.2px;top:501.06px;font-size:16.5px;color:#000;font-weight:normal;font-style:normal;transform:scale(1.0,0.9);">Aml Amr</div>
<div class="t" style="left:250.5px;top:501.06px;font-size:16.5px;color:#000;font-weight:normal;font-style:normal;transform:scale(1.0,0.9);">Invoice</div>
<div class="t" style="left:331.0px;top:501.03px;font-size:16.8px;color:#000;font-weight:normal;font-style:normal;transform:scale(1.0,0.9);width:97px;text-align:right;">3100.00</div>
<div class="t" style="left:433.5px;top:501.06px;font-size:16.5px;color:#000;font-weight:normal;font-style:normal;transform:scale(1.0,0.9);">Alexandria</div>
<div class="t" style="left:524.0px;top:500.98px;font-size:17.2px;color:#000;font-weight:normal;font-style:normal;transform:scale(1.0,0.9);width:89px;text-align:right;">4/1/2024</div>
<div class="t" style="left:110.2px;top:525.06px;font-size:16.5px;color:#000;font-weight:normal;font-style:normal;transform:scale(1.0,0.9);">Eyad Mohamed</div>
<div class="t" style="left:250.5px;top:525.06px;font-size:16.5px;color:#000;font-weight:normal;font-style:normal;transform:scale(1.0,0.9);">Discount</div>
<div class="t" style="left:331.0px;top:525.03px;font-size:16.8px;color:#000;font-weight:normal;font-style:normal;transform:scale(1.0,0.9);width:97px;text-align:right;">2500.00</div>
<div class="t" style="left:433.5px;top:525.06px;font-size:16.5px;color:#000;font-weight:normal;font-style:normal;transform:scale(1.0,0.9);">Cairo</div>
<div class="t" style="left:524.0px;top:524.98px;font-size:17.2px;color:#000;font-weight:normal;font-style:normal;transform:scale(1.0,0.9);width:89px;text-align:right;">5/1/2024</div>
<div class="t" style="left:110.2px;top:549.06px;font-size:16.5px;color:#000;font-weight:normal;font-style:normal;transform:scale(1.0,0.9);">Adham Mohamed</div>
<div class="t" style="left:250.5px;top:549.06px;font-size:16.5px;color:#000;font-weight:normal;font-style:normal;transform:scale(1.0,0.9);">Return</div>
<div class="t" style="left:331.0px;top:549.03px;font-size:16.8px;color:#000;font-weight:normal;font-style:normal;transform:scale(1.0,0.9);width:97px;text-align:right;">3570.00</div>
<div class="t" style="left:433.5px;top:549.06px;font-size:16.5px;color:#000;font-weight:normal;font-style:normal;transform:scale(1.0,0.9);">Cairo</div>
<div class="t" style="left:524.0px;top:548.98px;font-size:17.2px;color:#000;font-weight:normal;font-style:normal;transform:scale(1.0,0.9);width:89px;text-align:right;">6/1/2024</div>
<div class="t" style="left:110.2px;top:573.06px;font-size:16.5px;color:#000;font-weight:normal;font-style:normal;transform:scale(1.0,0.9);">Marwan Yasser</div>
<div class="t" style="left:250.5px;top:573.06px;font-size:16.5px;color:#000;font-weight:normal;font-style:normal;transform:scale(1.0,0.9);">Discount</div>
<div class="t" style="left:331.0px;top:573.03px;font-size:16.8px;color:#000;font-weight:normal;font-style:normal;transform:scale(1.0,0.9);width:97px;text-align:right;">1500.00</div>
<div class="t" style="left:433.5px;top:573.06px;font-size:16.5px;color:#000;font-weight:normal;font-style:normal;transform:scale(1.0,0.9);">Mansooura</div>
<div class="t" style="left:524.0px;top:572.98px;font-size:17.2px;color:#000;font-weight:normal;font-style:normal;transform:scale(1.0,0.9);width:89px;text-align:right;">7/1/2024</div>
<div class="t" style="left:110.2px;top:597.06px;font-size:16.5px;color:#000;font-weight:normal;font-style:normal;transform:scale(1.0,0.9);">Sondos Osama</div>
<div class="t" style="left:250.5px;top:597.06px;font-size:16.5px;color:#000;font-weight:normal;font-style:normal;transform:scale(1.0,0.9);">Invoice</div>
<div class="t" style="left:331.0px;top:597.03px;font-size:16.8px;color:#000;font-weight:normal;font-style:normal;transform:scale(1.0,0.9);width:97px;text-align:right;">7500.00</div>
<div class="t" style="left:433.5px;top:597.06px;font-size:16.5px;color:#000;font-weight:normal;font-style:normal;transform:scale(1.0,0.9);">Alexandria</div>
<div class="t" style="left:524.0px;top:596.98px;font-size:17.2px;color:#000;font-weight:normal;font-style:normal;transform:scale(1.0,0.9);width:89px;text-align:right;">8/1/2024</div>
<div class="t" style="left:110.2px;top:621.06px;font-size:16.5px;color:#000;font-weight:normal;font-style:normal;transform:scale(1.0,0.9);">Alaa Ahmed</div>
<div class="t" style="left:250.5px;top:621.06px;font-size:16.5px;color:#000;font-weight:normal;font-style:normal;transform:scale(1.0,0.9);">Return</div>
<div class="t" style="left:331.0px;top:621.03px;font-size:16.8px;color:#000;font-weight:normal;font-style:normal;transform:scale(1.0,0.9);width:97px;text-align:right;">7500.00</div>
<div class="t" style="left:433.5px;top:621.06px;font-size:16.5px;color:#000;font-weight:normal;font-style:normal;transform:scale(1.0,0.9);">Mansooura</div>
<div class="t" style="left:524.0px;top:620.98px;font-size:17.2px;color:#000;font-weight:normal;font-style:normal;transform:scale(1.0,0.9);width:89px;text-align:right;">9/1/2024</div>
<div class="t" style="left:110.2px;top:645.06px;font-size:16.5px;color:#000;font-weight:normal;font-style:normal;transform:scale(1.0,0.9);">Nada Mohamed</div>
<div class="t" style="left:250.5px;top:645.06px;font-size:16.5px;color:#000;font-weight:normal;font-style:normal;transform:scale(1.0,0.9);">Invoice</div>
<div class="t" style="left:331.0px;top:645.03px;font-size:16.8px;color:#000;font-weight:normal;font-style:normal;transform:scale(1.0,0.9);width:97px;text-align:right;">8500.00</div>
<div class="t" style="left:433.5px;top:645.06px;font-size:16.5px;color:#000;font-weight:normal;font-style:normal;transform:scale(1.0,0.9);">Cairo</div>
<div class="t" style="left:524.0px;top:644.98px;font-size:17.2px;color:#000;font-weight:normal;font-style:normal;transform:scale(1.0,0.9);width:89px;text-align:right;">10/1/2024</div>
<div class="t" style="left:110.2px;top:669.06px;font-size:16.5px;color:#000;font-weight:normal;font-style:normal;transform:scale(1.0,0.9);">Amr Adel</div>
<div class="t" style="left:250.5px;top:669.06px;font-size:16.5px;color:#000;font-weight:normal;font-style:normal;transform:scale(1.0,0.9);">Invoice</div>
<div class="t" style="left:331.0px;top:669.03px;font-size:16.8px;color:#000;font-weight:normal;font-style:normal;transform:scale(1.0,0.9);width:97px;text-align:right;">4600.00</div>
<div class="t" style="left:433.5px;top:669.06px;font-size:16.5px;color:#000;font-weight:normal;font-style:normal;transform:scale(1.0,0.9);">Cairo</div>
<div class="t" style="left:524.0px;top:668.98px;font-size:17.2px;color:#000;font-weight:normal;font-style:normal;transform:scale(1.0,0.9);width:89px;text-align:right;">11/1/2024</div>
<div class="t" style="left:110.2px;top:693.06px;font-size:16.5px;color:#000;font-weight:normal;font-style:normal;transform:scale(1.0,0.9);">Yassen Ali</div>
<div class="t" style="left:250.5px;top:693.06px;font-size:16.5px;color:#000;font-weight:normal;font-style:normal;transform:scale(1.0,0.9);">Discount</div>
<div class="t" style="left:331.0px;top:693.03px;font-size:16.8px;color:#000;font-weight:normal;font-style:normal;transform:scale(1.0,0.9);width:97px;text-align:right;">1550.00</div>
<div class="t" style="left:433.5px;top:693.06px;font-size:16.5px;color:#000;font-weight:normal;font-style:normal;transform:scale(1.0,0.9);">Alexandria</div>
<div class="t" style="left:524.0px;top:692.98px;font-size:17.2px;color:#000;font-weight:normal;font-style:normal;transform:scale(1.0,0.9);width:89px;text-align:right;">12/1/2024</div>
<div class="t" style="left:110.2px;top:717.06px;font-size:16.5px;color:#000;font-weight:normal;font-style:normal;transform:scale(1.0,0.9);">Naden Nhmed</div>
<div class="t" style="left:250.5px;top:717.06px;font-size:16.5px;color:#000;font-weight:normal;font-style:normal;transform:scale(1.0,0.9);">Return</div>
<div class="t" style="left:331.0px;top:717.03px;font-size:16.8px;color:#000;font-weight:normal;font-style:normal;transform:scale(1.0,0.9);width:97px;text-align:right;">3500.00</div>
<div class="t" style="left:433.5px;top:717.06px;font-size:16.5px;color:#000;font-weight:normal;font-style:normal;transform:scale(1.0,0.9);">Mansooura</div>
<div class="t" style="left:524.0px;top:716.98px;font-size:17.2px;color:#000;font-weight:normal;font-style:normal;transform:scale(1.0,0.9);width:89px;text-align:right;">13/1/2024</div>
<svg class="a" style="left:0;top:0" width="766" height="1020" viewBox="0 0 766 1020"><g opacity="0.42"><g fill="none" stroke="#d2d2d2" stroke-width="3.8" stroke-linecap="round">
<path d="M346.8 968.1 A6.1 6.1 0 0 0 346.8 980.3 H414"/>
<path d="M352.4 960 V980.3"/>
<circle cx="367.1" cy="972.8" r="5.3"/>
<path d="M383.9 971.5 V980.3 M392.4 971.8 V980.3 M399.4 970.2 V980.3 M405.8 969.6 V980.3"/>
<circle cx="420.6" cy="975.7" r="6.4"/>
</g><g fill="#d2d2d2"><circle cx="351.7" cy="958.6" r="2.3"/><circle cx="364.2" cy="958.6" r="2.3"/><circle cx="370.7" cy="958.6" r="2.3"/><circle cx="380.3" cy="966.2" r="2.3"/><circle cx="387" cy="966.2" r="2.3"/></g>
<text x="336.3" y="996.7" font-family="Liberation Sans" font-weight="bold" font-size="15.2" fill="#d2d2d2" textLength="92.5" lengthAdjust="spacingAndGlyphs">mostaql.com</text></g></svg>
</body></html>
